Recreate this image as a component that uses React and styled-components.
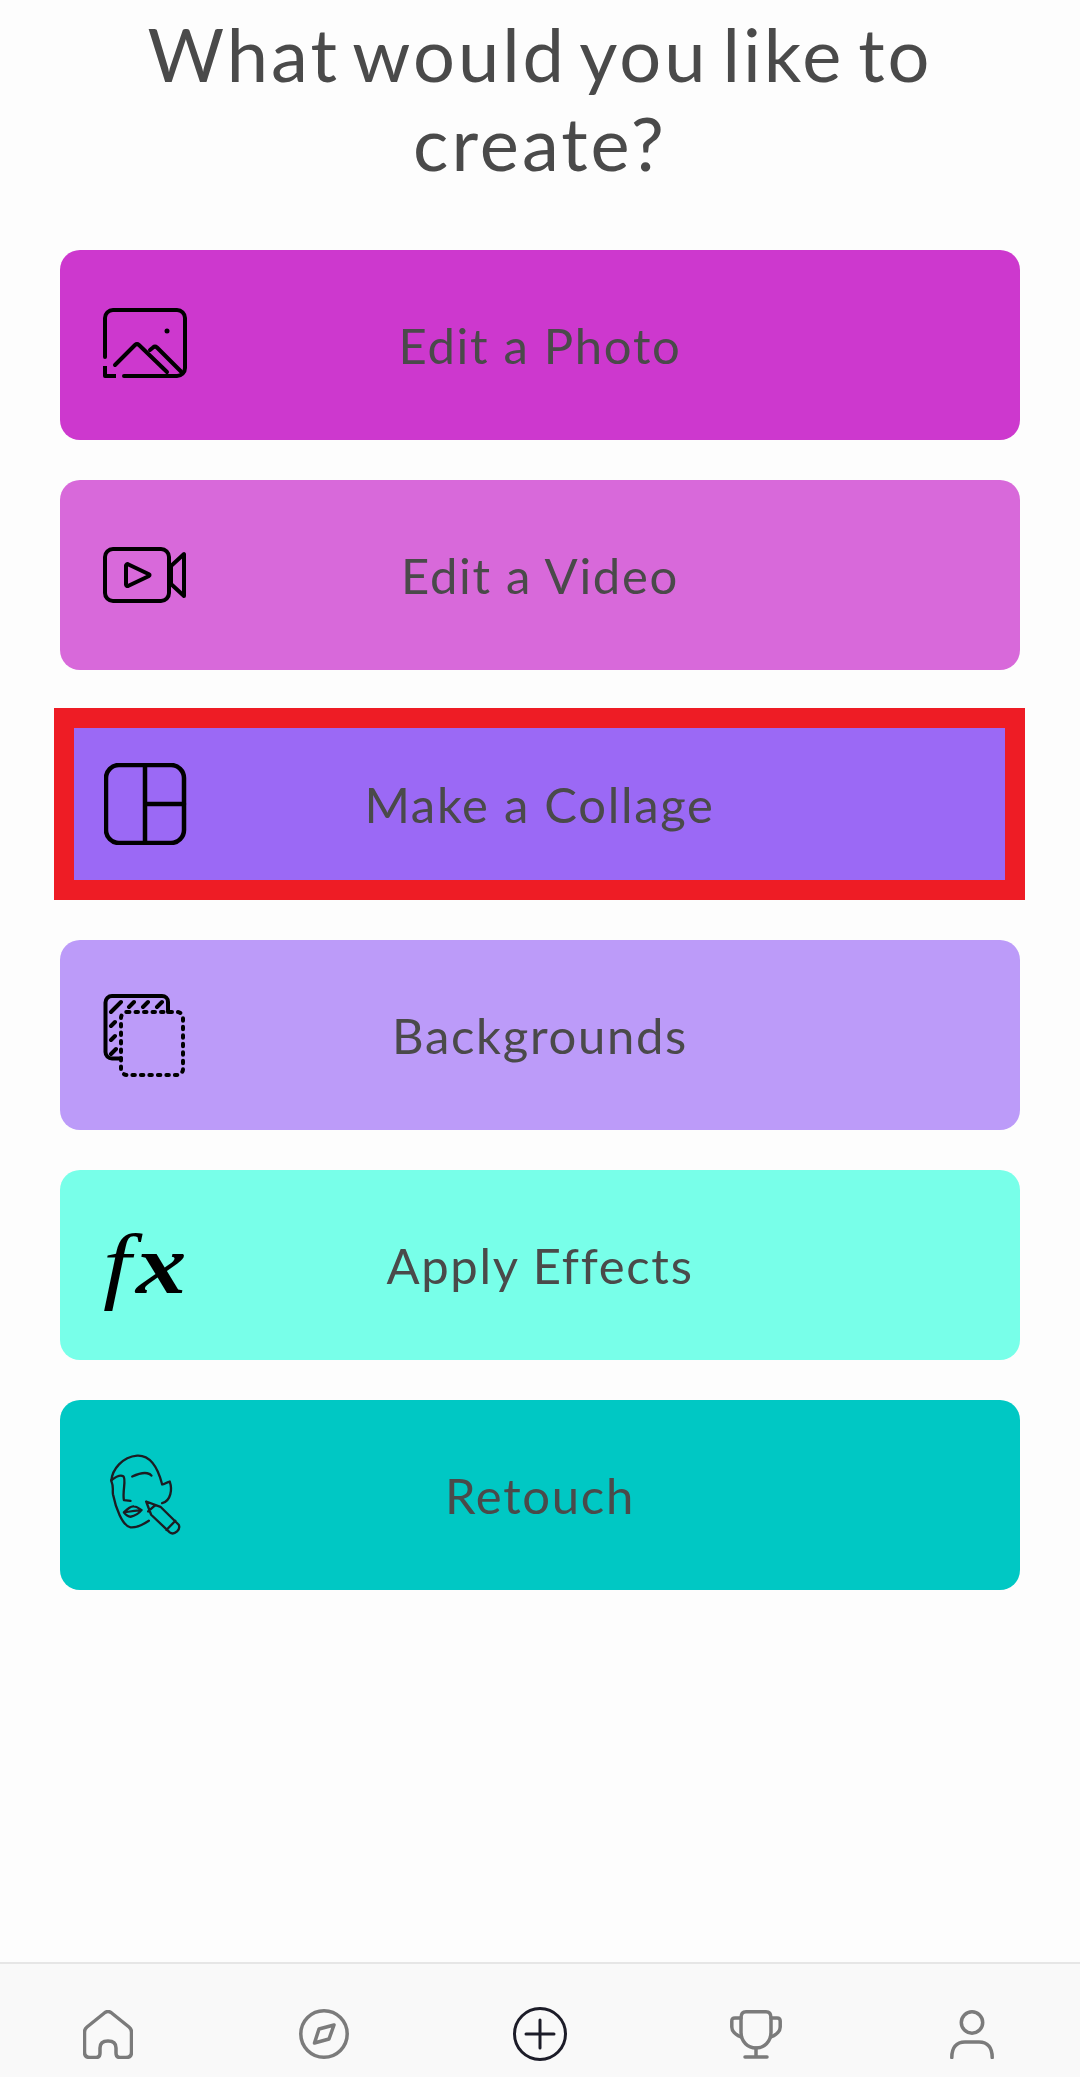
import React from 'react';
import styled, { createGlobalStyle } from 'styled-components';

const GlobalStyle = createGlobalStyle`
  html, body {
    margin: 0;
    padding: 0;
    background: #fdfdfd;
  }
  * {
    box-sizing: border-box;
  }
`;

const Page = styled.div`
  width: 1080px;
  height: 2077px;
  display: flex;
  flex-flow: column;
  font-family: "Lato", "Noto Sans", sans-serif;
  background: #fdfdfd;
  color: #4a4a4a;
`;

const Main = styled.main`
  flex: 1;
  padding: 9px 60px 0;
`;

const Title = styled.h1`
  margin: 0 0 63px;
  font-size: 74px;
  line-height: 89px;
  font-weight: 400;
  text-align: center;
  letter-spacing: 3px;
  word-spacing: -8px;
`;

const List = styled.div`
  display: flex;
  flex-flow: column;
  gap: 40px;
`;

const Card = styled.div`
  height: 190px;
  padding: 0 43px;
  display: grid;
  grid-template-columns: 84px 1fr 84px;
  align-items: center;
  border-radius: 20px;
  background: ${(props) => props.$color};
`;

const HighlightCard = styled(Card)`
  height: 192px;
  margin: -2px -5px 0 -6px;
  padding: 0 30px;
  border: 20px solid #ee1c25;
  border-radius: 0;
`;

const IconSlot = styled.div`
  display: flex;
  align-items: center;
  justify-content: center;
`;

const Label = styled.span`
  font-size: 49px;
  text-align: center;
  letter-spacing: 1.7px;
`;

const FxGlyph = styled.span`
  display: inline-block;
  font-family: "Liberation Serif", serif;
  font-style: italic;
  font-size: 84px;
  line-height: 70px;
  color: #000;
  transform: scaleX(1.2);
  b {
    margin-left: 4px;
    font-weight: 700;
  }
`;

const Line = styled.svg`
  display: block;
  margin-bottom: ${(props) => props.$lift || 0}px;
  fill: none;
  stroke: ${(props) => props.$stroke || '#000'};
  stroke-width: ${(props) => props.$weight || 4}px;
  stroke-linecap: round;
  stroke-linejoin: round;
`;

const TabBar = styled.nav`
  height: 115px;
  padding-top: 43px;
  display: grid;
  grid-template-columns: repeat(5, 1fr);
  background: #f9f9f9;
  border-top: 2px solid #e6e6e6;
`;

const Tab = styled.div`
  height: 54px;
  display: flex;
  align-items: center;
  justify-content: center;
`;

const PhotoIcon = () => (
  <Line width="84" height="70" viewBox="0 0 84 70" $lift={4}>
    <path d="M2 49V10a8 8 0 0 1 8-8h64a8 8 0 0 1 8 8v50a8 8 0 0 1-8 8H21" />
    <path d="M2 58v10h11" strokeLinecap="butt" />
    <path d="M12 57l20-20a3 3 0 0 1 4 0l28 27" />
    <path d="M47 42l3-2.500a3 3 0 0 1 4 0l24 24" />
    <circle cx="64" cy="23" r="2.500" fill="#000" stroke="none" />
  </Line>
);

const VideoIcon = () => (
  <Line width="84" height="56" viewBox="0 0 84 56">
    <rect x="2" y="2" width="64" height="52" rx="8" />
    <path d="M23 18.500a1.500 1.500 0 0 1 2-1.300l21 10a1 1 0 0 1 0 1.800l-21 10a1.500 1.500 0 0 1-2-1.300z" />
    <path d="M68 19l13-12v42L68 37z" />
  </Line>
);

const CollageIcon = () => (
  <Line width="84" height="82" viewBox="0 0 84 82" $weight={4.5}>
    <rect x="2" y="2" width="78" height="78" rx="13" />
    <path d="M41 2v78M41 41h39" />
  </Line>
);

const BackgroundsIcon = () => (
  <Line width="84" height="83" viewBox="0 0 84 83">
    <path d="M18 64.500H9a6.500 6.500 0 0 1-6.500-6.500V8.500A6.500 6.500 0 0 1 9 2h50a6 6 0 0 1 6 6v10" />
    <rect x="18" y="18" width="62" height="63" rx="6" strokeDasharray="2.500 6" />
    <path d="M8 18L18 8M26 13l5-5M40 13l5-5M54 13l5-5M8 32l4-4M8 46l4-4M8 60l5-5" />
  </Line>
);

const RetouchIcon = () => (
  <Line width="77" height="88" viewBox="80 30 230 265" $stroke="#1c1c22" $weight={7}>
    <path d="M205 240C190 250 170 262 150 260C125 255 105 200 97 160C95 145 100 140 92 120C95 85 125 48 170 44C210 42 232 80 245 130" />
    <path d="M245 130C250 132 255 125 268 122C276 145 272 180 245 187" />
    <path d="M92 118C105 108 120 102 128 106C138 115 125 150 130 178L150 180" />
    <path d="M155 107C170 100 190 95 200 97C205 98 210 100 213 104" />
    <path d="M130 215C140 205 150 195 160 197C170 197 175 203 183 208C175 218 165 225 150 228C140 228 135 222 130 215ZM130 215C145 212 165 210 183 208" />
    <path d="M197 182L240 198L295 252Q300 262 290 272Q278 283 268 275L212 222ZM258 268L285 240M203 212L222 195" />
  </Line>
);

const HomeIcon = () => (
  <Line width="50" height="49" viewBox="0 0 50 49" $stroke="#7b7b7b" $weight={3.5}>
    <path d="M1.500 22Q1.500 19 4 17L22 2.500Q25 .5 28 2.500L46 17Q48.500 19 48.500 22V42Q48.500 47.500 43 47.500H37Q33 47.500 33 43V38Q33 31 25 31Q17 31 17 38V43Q17 47.500 13 47.500H7Q1.500 47.500 1.500 42Z" />
  </Line>
);

const CompassIcon = () => (
  <Line width="50" height="50" viewBox="0 0 50 50" $stroke="#7b7b7b" $weight={3.5}>
    <circle cx="25" cy="25" r="23.200" />
    <path d="M35 16L20 20L15.500 34L30 30Z" />
  </Line>
);

const PlusIcon = () => (
  <Line width="54" height="54" viewBox="0 0 54 54" $stroke="#1c1c28" $weight={3}>
    <circle cx="27" cy="27" r="25.500" />
    <path d="M13 27h28M27 13v28" />
  </Line>
);

const TrophyIcon = () => (
  <Line width="52" height="49" viewBox="0 0 52 49" $stroke="#7b7b7b" $weight={3.5}>
    <path d="M16 1.800H36Q41 1.800 41 8V22C41 32 34 38 26 38C18 38 11 32 11 22V8Q11 1.800 16 1.800Z" />
    <path d="M11 8H5Q1.800 8 1.800 11V17Q1.800 23 11 27M41 8H47Q50.200 8 50.200 11V17Q50.200 23 41 27" />
    <path d="M26 38V47M15 47H37" />
  </Line>
);

const UserIcon = () => (
  <Line width="44" height="49" viewBox="0 0 44 49" $stroke="#7b7b7b" $weight={3.5}>
    <circle cx="22" cy="12.500" r="10.700" />
    <path d="M1.800 47.500C1.800 38 6 32 15 32H29C38 32 42.200 38 42.200 47.500" />
  </Line>
);

const actions = [
  { label: 'Edit a Photo', color: '#cd38ce', icon: <PhotoIcon /> },
  { label: 'Edit a Video', color: '#d869da', icon: <VideoIcon /> },
  { label: 'Make a Collage', color: '#9b69f5', icon: <CollageIcon />, marked: true },
  { label: 'Backgrounds', color: '#bc9bf9', icon: <BackgroundsIcon /> },
  { label: 'Apply Effects', color: '#78ffe9', icon: <FxGlyph>f<b>x</b></FxGlyph> },
  { label: 'Retouch', color: '#00c8c4', icon: <RetouchIcon /> },
];

const tabs = [<HomeIcon />, <CompassIcon />, <PlusIcon />, <TrophyIcon />, <UserIcon />];

const App = () => {
  return (
    <Page>
      <GlobalStyle />
      <Main>
        <Title>What would you like to<br />create?</Title>
        <List>
          {actions.map((item) => {
            const Box = item.marked ? HighlightCard : Card;
            return (
              <Box key={item.label} $color={item.color}>
                <IconSlot>{item.icon}</IconSlot>
                <Label>{item.label}</Label>
              </Box>
            );
          })}
        </List>
      </Main>
      <TabBar>
        {tabs.map((icon, i) => (
          <Tab key={i}>{icon}</Tab>
        ))}
      </TabBar>
    </Page>
  );
};

export default App;
